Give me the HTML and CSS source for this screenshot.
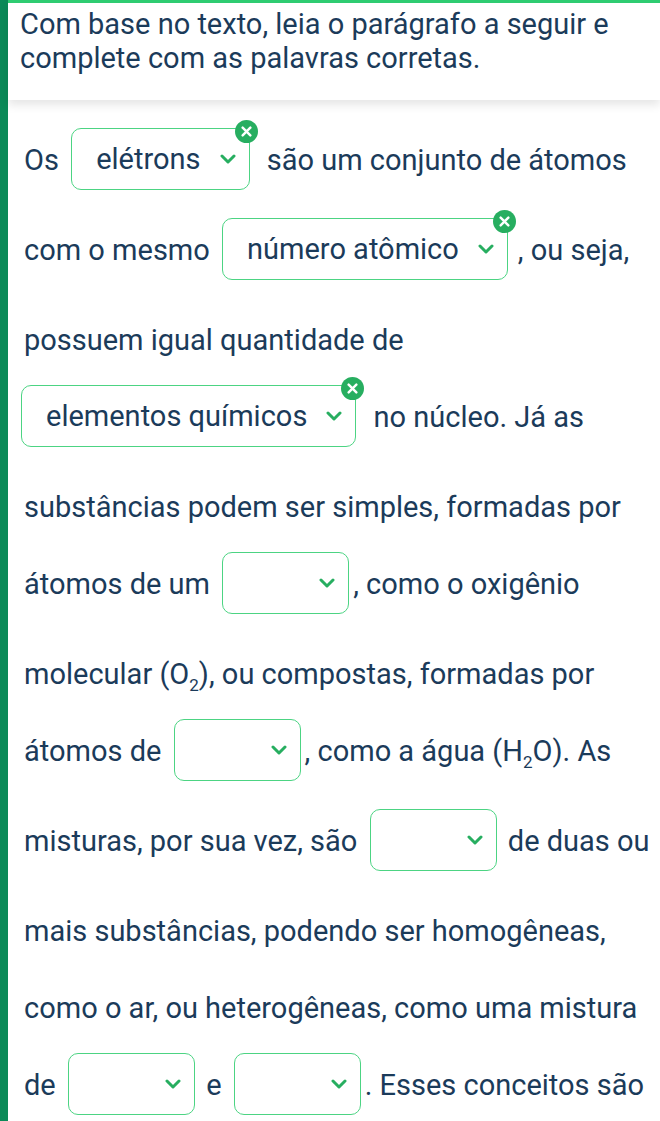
FILE: index.html
```html
<!DOCTYPE html>
<html>
<head>
    <title>Completar</title>
    <link rel="stylesheet" href="styles.css">
</head>
<body>
    <div class="page">
        <div class="header">
            Com base no texto, leia o parágrafo a seguir e complete com as palavras corretas.
        </div>

        <p class="question">
            Os <span class="blank filled">elétrons <svg class="chevron" viewBox="0 0 16 10"><polyline points="2,2 8,8 14,2"/></svg><span class="clear"><svg viewBox="0 0 10 10"><path d="M1.5 1.5 L8.5 8.5 M8.5 1.5 L1.5 8.5"/></svg></span></span> são um conjunto de átomos
            com o mesmo <span class="blank filled">número atômico <svg class="chevron" viewBox="0 0 16 10"><polyline points="2,2 8,8 14,2"/></svg><span class="clear"><svg viewBox="0 0 10 10"><path d="M1.5 1.5 L8.5 8.5 M8.5 1.5 L1.5 8.5"/></svg></span></span>, ou seja,
            possuem igual quantidade de
            <span class="blank filled line-start">elementos químicos <svg class="chevron" viewBox="0 0 16 10"><polyline points="2,2 8,8 14,2"/></svg><span class="clear"><svg viewBox="0 0 10 10"><path d="M1.5 1.5 L8.5 8.5 M8.5 1.5 L1.5 8.5"/></svg></span></span> no núcleo. Já as
            substâncias podem ser simples, formadas por
            átomos de um <span class="blank"><svg class="chevron" viewBox="0 0 16 10"><polyline points="2,2 8,8 14,2"/></svg></span>, como o oxigênio
            molecular (O<sub>2</sub>), ou compostas, formadas por
            átomos de <span class="blank"><svg class="chevron" viewBox="0 0 16 10"><polyline points="2,2 8,8 14,2"/></svg></span>, como a água (H<sub>2</sub>O). As
            misturas, por sua vez, são <span class="blank"><svg class="chevron" viewBox="0 0 16 10"><polyline points="2,2 8,8 14,2"/></svg></span> de duas ou
            mais substâncias, podendo ser homogêneas,
            como o ar, ou heterogêneas, como uma mistura
            de <span class="blank"><svg class="chevron" viewBox="0 0 16 10"><polyline points="2,2 8,8 14,2"/></svg></span> e <span class="blank"><svg class="chevron" viewBox="0 0 16 10"><polyline points="2,2 8,8 14,2"/></svg></span>. Esses conceitos são
        </p>
    </div>
</body>
</html>
```

FILE: styles.css
```css
body {
    font-family: Roboto, "Noto Sans", sans-serif;
    background-color: #fff;
    color: #1b3b5a;
    margin: 0;
}

.page {
    border-left: 8px solid #0b8a58;
    min-height: 100vh;
}

.header {
    border-top: 3px solid #2ecc71;
    padding: 4px 20px 25px 12px;
    font-size: 29px;
    line-height: 34px;
    box-shadow: 0 5px 9px rgba(0, 0, 0, 0.1);
}

.question {
    margin: 0;
    padding: 22px 0 0 16px;
    font-size: 29px;
    line-height: 77px;
}

.blank {
    position: relative;
    display: inline-flex;
    align-items: center;
    justify-content: flex-end;
    box-sizing: border-box;
    vertical-align: top;
    width: 127px;
    height: 62px;
    margin: 6px 4px 22px 5px;
    padding: 0 13px 0 24px;
    border: 1.5px solid #4cd483;
    border-radius: 10px;
    line-height: 1;
}

.blank.filled {
    width: auto;
    gap: 19px;
    margin-right: 10px;
}

.blank.line-start {
    margin-left: -3px;
}

.chevron {
    width: 16px;
    height: 10px;
    fill: none;
    stroke: #27ae60;
    stroke-width: 3;
    stroke-linecap: round;
    stroke-linejoin: round;
}

.clear {
    position: absolute;
    top: -9px;
    right: -9px;
    width: 23px;
    height: 23px;
    border-radius: 50%;
    background-color: #27ae60;
    display: flex;
    align-items: center;
    justify-content: center;
}

.clear svg {
    width: 11px;
    height: 11px;
    fill: none;
    stroke: #fff;
    stroke-width: 2.2;
    stroke-linecap: round;
}

sub {
    font-size: 17px;
    line-height: 0;
}
```
